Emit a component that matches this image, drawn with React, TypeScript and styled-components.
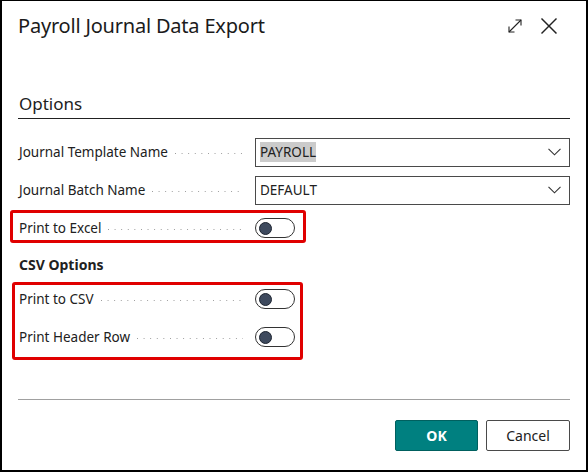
import React from 'react';
import styled, { createGlobalStyle } from 'styled-components';

const Global = createGlobalStyle`
  html, body { margin: 0; padding: 0; background: #fff; }
  body { font-family: "Noto Sans", "Open Sans", sans-serif; color: #212121; }
  * { box-sizing: border-box; }
`;

const Dialog = styled.div`
  position: relative;
  width: 588px;
  height: 472px;
  border: 2px solid #000;
  border-top-width: 1px;
  display: flex;
  flex-direction: column;
  background: #fff;
`;

const Header = styled.div`
  height: 49px;
  display: flex;
  align-items: center;
  padding: 0 28px 0 16px;
`;

const Title = styled.h1`
  margin: 0;
  flex: 1;
  font-size: 20px;
  font-weight: 400;
  letter-spacing: -0.2px;
  color: #1b1b1b;
`;

const IconButton = styled.span`
  display: flex;
  align-items: center;
  justify-content: center;
  color: #212121;
  margin-left: ${(p: { gap?: number }) => p.gap ?? 0}px;
`;

const Body = styled.div`
  padding: 42px 16px 0 16px;
`;

const SectionHeading = styled.h2`
  margin: 0;
  font-size: 17px;
  font-weight: 400;
  line-height: 24px;
  padding: 0 0 2px 1px;
  border-bottom: 1px solid #212121;
`;

const Fields = styled.div`
  margin-top: 14px;
`;

const Row = styled.div`
  height: 38px;
  display: grid;
  grid-template-columns: 237px 1fr;
  align-items: center;
`;

const Label = styled.div`
  display: flex;
  align-items: center;
  font-size: 13.5px;
  padding-left: 1px;
  white-space: nowrap;
`;

const Leader = styled.span`
  flex: 1;
  height: 1px;
  margin: 2px 12px 0 7px;
  background-image: linear-gradient(to right, #9a9a9a 1px, transparent 1px);
  background-size: 6.6px 1px;
  background-repeat: repeat-x;
`;

const Select = styled.div`
  height: 29px;
  border: 1px solid #4a4a4a;
  display: flex;
  align-items: center;
  padding: 0 8px 0 4px;
  font-size: 13.5px;
`;

const Value = styled.span<{ selected?: boolean }>`
  flex: 1;
  span {
    background: ${(p) => (p.selected ? '#cbcbcb' : 'transparent')};
    padding: 1px 0;
  }
`;

const Toggle = styled.div`
  width: 40px;
  height: 20px;
  border: 1px solid #333;
  border-radius: 10px;
  display: flex;
  align-items: center;
  padding-left: 3px;
`;

const Knob = styled.span`
  width: 13px;
  height: 13px;
  border-radius: 50%;
  background: #3e4a5e;
  border: 1px solid #1d2430;
`;

const SubHeading = styled.div`
  font-size: 14px;
  font-weight: 700;
  line-height: 24px;
  margin: 6px 0 3px 1px;
`;

const Footer = styled.div`
  margin-top: auto;
  padding: 0 16px 19px 16px;
`;

const Separator = styled.div`
  height: 1px;
  background: #a0a0a0;
`;

const Buttons = styled.div`
  display: flex;
  justify-content: flex-end;
  gap: 8px;
  margin-top: 20px;
`;

const Button = styled.button<{ primary?: boolean }>`
  width: ${(p) => (p.primary ? 83 : 84)}px;
  height: 31px;
  border-radius: 2px;
  font-family: "Noto Sans", "Open Sans", sans-serif;
  font-size: 14px;
  font-weight: ${(p) => (p.primary ? 700 : 400)};
  color: ${(p) => (p.primary ? '#fff' : '#212121')};
  background: ${(p) => (p.primary ? '#008080' : '#fff')};
  border: 1px solid ${(p) => (p.primary ? '#00605f' : '#4a4a4a')};
  padding: 0;
`;

const Highlight = styled.div<{ l: number; t: number; w: number; h: number }>`
  position: absolute;
  left: ${(p) => p.l}px;
  top: ${(p) => p.t}px;
  width: ${(p) => p.w}px;
  height: ${(p) => p.h}px;
  border: 3.5px solid #e00000;
  border-radius: 3px;
  pointer-events: none;
`;

const Chevron = () => (
  <svg width="13" height="8" viewBox="0 0 13 8" fill="none">
    <polyline points="0.5,0.8 6.5,6.8 12.5,0.8" stroke="#333" strokeWidth="1.1" />
  </svg>
);

const ExpandIcon = () => (
  <svg width="16" height="16" viewBox="0 0 16 16" fill="none" stroke="#222" strokeWidth="1.1">
    <path d="M2 14 L14 2" />
    <path d="M8.5 2 H14 V7.5" />
    <path d="M2 8.5 V14 H7.5" />
  </svg>
);

const CloseIcon = () => (
  <svg width="18" height="18" viewBox="0 0 18 18" fill="none" stroke="#222" strokeWidth="1.5">
    <path d="M1.5 1.5 L16.5 16.5" />
    <path d="M16.5 1.5 L1.5 16.5" />
  </svg>
);

const Field = ({ label, children }: { label: string; children: React.ReactNode }) => (
  <Row>
    <Label>
      {label}
      <Leader />
    </Label>
    <div>{children}</div>
  </Row>
);

const Switch = () => (
  <Toggle>
    <Knob />
  </Toggle>
);

export default function App() {
  return (
    <>
      <Global />
      <Dialog>
        <Header>
          <Title>Payroll Journal Data Export</Title>
          <IconButton><ExpandIcon /></IconButton>
          <IconButton gap={17}><CloseIcon /></IconButton>
        </Header>
        <Body>
          <SectionHeading>Options</SectionHeading>
          <Fields>
            <Field label="Journal Template Name">
              <Select>
                <Value selected><span>PAYROLL</span></Value>
                <Chevron />
              </Select>
            </Field>
            <Field label="Journal Batch Name">
              <Select>
                <Value><span>DEFAULT</span></Value>
                <Chevron />
              </Select>
            </Field>
            <Field label="Print to Excel">
              <Switch />
            </Field>
          </Fields>
          <SubHeading>CSV Options</SubHeading>
          <Field label="Print to CSV">
            <Switch />
          </Field>
          <Field label="Print Header Row">
            <Switch />
          </Field>
        </Body>
        <Footer>
          <Separator />
          <Buttons>
            <Button primary>OK</Button>
            <Button>Cancel</Button>
          </Buttons>
        </Footer>
        <Highlight l={8} t={209} w={296} h={33} />
        <Highlight l={10} t={281} w={291} h={78} />
      </Dialog>
    </>
  );
}
